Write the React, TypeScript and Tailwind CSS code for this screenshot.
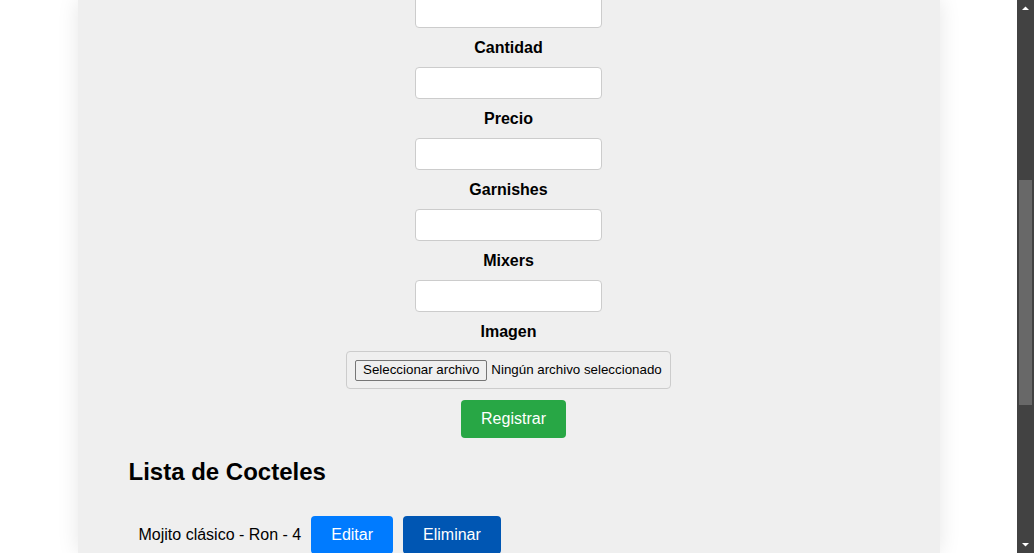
import React from "react";

const Field = ({ label, first }: { label?: string; first?: boolean }) => (
  <>
    <div
      className={`w-[187px] h-[32px] bg-white border border-[#cccccc] rounded-[4px] ${first ? "-mt-[4px]" : ""}`}
    />
    {label && (
      <div className="mt-[11px] mb-[10px] leading-[18px] text-[16px] font-bold text-black">{label}</div>
    )}
  </>
);

export default function App() {
  return (
    <div
      className="flex h-[553px] w-[1034px] overflow-hidden bg-white"
      style={{ fontFamily: '"Liberation Sans", Arial, sans-serif' }}
    >
      <div className="flex-1 flex justify-center">
        <div className="w-[862px] h-full bg-[#efefef] shadow-[0_0_20px_rgba(0,0,0,0.1)] flex flex-col">
          <div className="flex flex-col items-center">
            <Field first label="Cantidad" />
            <Field label="Precio" />
            <Field label="Garnishes" />
            <Field label="Mixers" />
            <Field label="Imagen" />
          </div>
          <div className="flex flex-col items-center -mt-[11px]">
            <div className="mt-[11px] h-[38px] w-[325px] border border-[#cccccc] rounded-[4px] flex items-center pl-[8px] gap-[4px] text-[13.33px] text-black">
              <span className="h-[21px] px-[7px] flex items-center bg-[#efefef] border border-[#767676] rounded-[2px] leading-none">
                Seleccionar archivo
              </span>
              <span className="leading-none">Ningún archivo seleccionado</span>
            </div>
            <button className="mt-[11px] ml-[10px] h-[38px] px-[20px] bg-[#28a745] text-white text-[16px] rounded-[4px]">
              Registrar
            </button>
          </div>
          <h2 className="ml-[51px] mt-[20px] text-[24px] font-bold leading-[28px] text-black">Lista de Cocteles</h2>
          <div className="ml-[61px] mt-[30px] flex items-center gap-[10px] text-[16px] text-black">
            <span>Mojito clásico - Ron - 4</span>
            <button className="h-[38px] px-[20px] bg-[#007bff] text-white rounded-[4px]">Editar</button>
            <button className="h-[38px] px-[20px] bg-[#0056b3] text-white rounded-[4px]">Eliminar</button>
          </div>
        </div>
      </div>
      <div className="w-[17px] h-full bg-[#424242] flex flex-col items-center">
        <svg width="17" height="17" viewBox="0 0 17 17" className="shrink-0">
          <path d="M5 10 L8.5 6.5 L12 10 Z" fill="#ffffff" />
        </svg>
        <div className="h-[163px] shrink-0" />
        <div className="w-[13px] h-[225px] bg-[#686868] shrink-0" />
        <div className="flex-1" />
        <svg width="17" height="17" viewBox="0 0 17 17" className="shrink-0">
          <path d="M5 7 L8.5 10.5 L12 7 Z" fill="#ffffff" />
        </svg>
      </div>
    </div>
  );
}
